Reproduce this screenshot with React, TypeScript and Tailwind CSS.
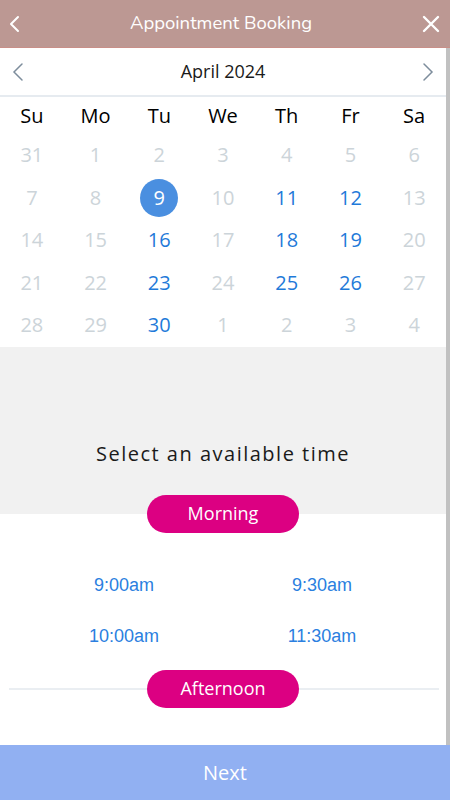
import React from 'react';

type Day = { n: number; on?: boolean; sel?: boolean };

const weekDays = ['Su', 'Mo', 'Tu', 'We', 'Th', 'Fr', 'Sa'];

const weeks: Day[][] = [
  [{ n: 31 }, { n: 1 }, { n: 2 }, { n: 3 }, { n: 4 }, { n: 5 }, { n: 6 }],
  [{ n: 7 }, { n: 8 }, { n: 9, sel: true }, { n: 10 }, { n: 11, on: true }, { n: 12, on: true }, { n: 13 }],
  [{ n: 14 }, { n: 15 }, { n: 16, on: true }, { n: 17 }, { n: 18, on: true }, { n: 19, on: true }, { n: 20 }],
  [{ n: 21 }, { n: 22 }, { n: 23, on: true }, { n: 24 }, { n: 25, on: true }, { n: 26, on: true }, { n: 27 }],
  [{ n: 28 }, { n: 29 }, { n: 30, on: true }, { n: 1 }, { n: 2 }, { n: 3 }, { n: 4 }],
];

const morning = ['9:00am', '9:30am', '10:00am', '11:30am'];

const Pill = ({ label }: { label: string }) => (
  <div className="relative z-10 flex h-[38px] w-[152px] items-center justify-center rounded-full bg-[#dc0082] text-[18px] text-white">
    {label}
  </div>
);

export default function App() {
  return (
    <div className="flex h-[800px] w-[450px] flex-col bg-white font-['Open_Sans',sans-serif]">
      {/* header */}
      <div className="flex h-12 shrink-0 items-center justify-between border-b border-[#c98f88] bg-[#bc9893] px-[9px] text-white">
        <svg width="12" height="18" viewBox="0 0 12 18" fill="none" stroke="white" strokeWidth="2" strokeLinecap="round" strokeLinejoin="round">
          <path d="M9 2 L2 9 L9 16" />
        </svg>
        <span className="font-['Nunito','Open_Sans',sans-serif] text-[18.5px]">Appointment Booking</span>
        <svg width="20" height="20" viewBox="0 0 20 20" fill="none" stroke="white" strokeWidth="2.4" strokeLinecap="round">
          <path d="M3 3 L17 17 M17 3 L3 17" />
        </svg>
      </div>

      <div className="flex h-[697px] shrink-0">
        <div className="flex w-[446px] flex-col">
          {/* month nav */}
          <div className="flex h-[49px] items-center justify-between border-b-2 border-[#e6ebf0] px-[12px]">
            <svg width="12" height="20" viewBox="0 0 12 20" fill="none" stroke="#7d8d9c" strokeWidth="1.5" strokeLinecap="round">
              <path d="M10 2 L2 10 L10 18" />
            </svg>
            <span className="text-[18px] text-[#1a1a1a]">April 2024</span>
            <svg width="12" height="20" viewBox="0 0 12 20" fill="none" stroke="#7d8d9c" strokeWidth="1.5" strokeLinecap="round">
              <path d="M2 2 L10 10 L2 18" />
            </svg>
          </div>

          {/* weekdays */}
          <div className="grid h-[37px] grid-cols-7 items-center text-center text-[20px] text-black">
            {weekDays.map((d) => (
              <span key={d}>{d}</span>
            ))}
          </div>

          {/* dates */}
          {weeks.map((w, i) => (
            <div key={i} className="grid h-[42.5px] grid-cols-7 items-center text-center text-[20px]">
              {w.map((d, j) => (
                <div key={j} className="flex items-center justify-center">
                  {d.sel ? (
                    <span className="flex h-[38px] w-[38px] items-center justify-center rounded-full bg-[#4a8fe0] text-white">
                      {d.n}
                    </span>
                  ) : (
                    <span className={d.on ? 'text-[#1f7ad9]' : 'text-[#ccd4d9]'}>{d.n}</span>
                  )}
                </div>
              ))}
            </div>
          ))}

          {/* time area */}
          <div className="h-[167px] bg-[#f1f1f1] pt-[92px] text-center text-[20px] tracking-[1.5px] text-[#1a1a1a]">
            Select an available time
          </div>
          <div className="-mt-[19px] flex justify-center">
            <Pill label="Morning" />
          </div>

          <div className="mt-[27px] grid grid-cols-2 px-[25px] font-['Liberation_Sans',Arial,sans-serif] text-[18px] text-[#2b7fe0]">
            {morning.map((t) => (
              <div key={t} className="flex h-[51px] items-center justify-center">
                {t}
              </div>
            ))}
          </div>

          <div className="relative mt-[8px] flex items-center justify-center">
            <div className="absolute left-[9px] right-[7px] top-[18px] h-[2px] bg-[#eaeef2]" />
            <Pill label="Afternoon" />
          </div>
        </div>
        <div className="w-1 bg-[#c1c1c1]" />
      </div>

      {/* footer */}
      <div className="flex h-[55px] shrink-0 items-center justify-center bg-[#91b0f2] text-[20px] text-white">
        Next
      </div>
    </div>
  );
}
